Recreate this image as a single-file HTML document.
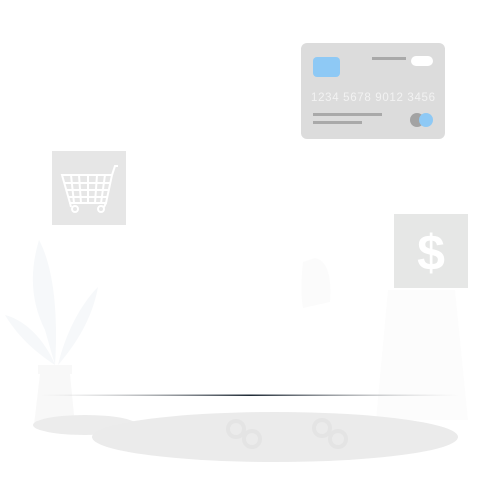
<!DOCTYPE html>
<html><head><style>
body{margin:0;width:500px;height:500px;background:#fff;position:relative;overflow:hidden;font-family:"Liberation Sans",sans-serif}
.a{position:absolute}
</style></head><body>
<svg class="a" style="left:0;top:0" width="500" height="500" viewBox="0 0 500 500">
<g fill="#f6f8fa">
<path d="M39 240 C30 270 30 300 45 330 L55 365 C58 320 55 270 39 240Z"/>
<path d="M5 315 C20 340 40 355 55 365 C45 340 25 320 5 315Z"/>
<path d="M98 287 C80 305 65 335 58 365 C75 345 92 320 98 287Z"/>
</g>
<path d="M38 365 H72 V374 H70 L75 425 H34 L40 374 H38Z" fill="#f8f8f8"/>
<path d="M388 290 L455 290 L468 420 L376 420Z" fill="#fcfcfc"/>
<path d="M303 262 C300 290 302 300 303 308 L330 302 C332 280 328 260 315 258Z" fill="#fbfbfb"/>
<ellipse cx="85" cy="425" rx="52" ry="10" fill="#ececec"/>
<ellipse cx="275" cy="437" rx="183" ry="25" fill="#ebebeb"/>
<g fill="none" stroke="#e4e4e4" stroke-width="4"><circle cx="236" cy="429" r="8"/><circle cx="252" cy="439" r="8"/><circle cx="322" cy="428" r="8"/><circle cx="338" cy="439" r="8"/></g>
<defs><linearGradient id="g" x1="0" x2="1"><stop offset="0" stop-color="#bbb" stop-opacity="0"/><stop offset=".5" stop-color="#1f2a36"/><stop offset="1" stop-color="#bbb" stop-opacity="0"/></linearGradient></defs>
<rect x="40" y="394.5" width="420" height="1.5" fill="url(#g)"/>
<rect x="52" y="151" width="74" height="74" fill="#e6e6e6"/>
<g fill="none" stroke="#fff" stroke-width="2">
<path d="M62 175 H112 L106 203 H70 Z"/>
<path d="M112 175 L115 166 H118"/>
<path d="M64 183 H110 M66 190 H109 M68 197 H107"/>
<path d="M71 175 L74 203 M79 175 L81 203 M88 175 L88 203 M97 175 L95 203 M105 175 L101 203"/>
<path d="M70 203 L71 207 M106 203 L104 207"/>
<circle cx="75" cy="209" r="3"/><circle cx="101" cy="209" r="3"/>
</g>
<rect x="394" y="214" width="74" height="74" fill="#e6e7e6"/>
<text x="431" y="270" text-anchor="middle" font-size="50" font-weight="bold" fill="#fff" font-family="Liberation Sans">$</text>
<rect x="301" y="43" width="144" height="96" rx="6" fill="#dcdcdc"/>
<rect x="313" y="57" width="27" height="20" rx="4" fill="#8ec9f5"/>
<rect x="372" y="57" width="34" height="3" fill="#a9a9a9"/>
<rect x="411" y="56" width="22" height="10" rx="5" fill="#fff"/>
<text x="311" y="101" font-size="11.5" fill="#f2f2f2" textLength="124" lengthAdjust="spacing">1234 5678 9012 3456</text>
<rect x="313" y="113" width="69" height="3" fill="#a9a9a9"/>
<rect x="313" y="121" width="49" height="3" fill="#a9a9a9"/>
<circle cx="417" cy="120" r="7" fill="#a3a3a3"/>
<circle cx="426" cy="120" r="7" fill="#8ec9f5"/>
</svg>
</body></html>
